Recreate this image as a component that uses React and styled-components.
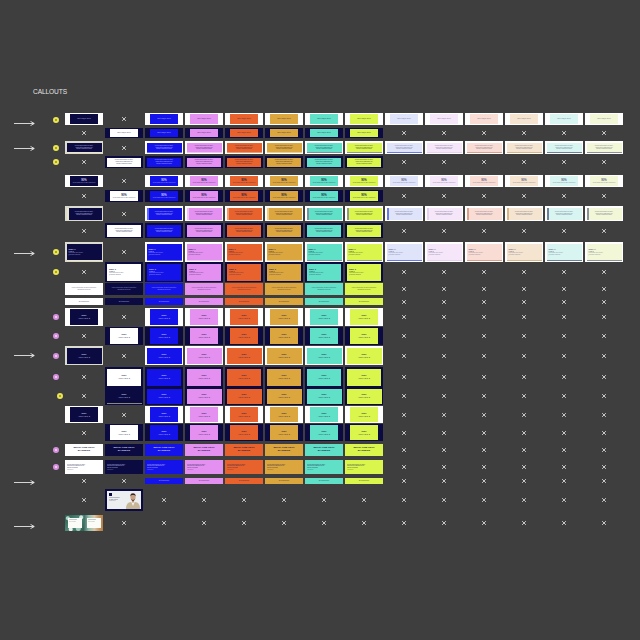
import React from 'react';
import styled, { createGlobalStyle } from 'styled-components';

const Global = createGlobalStyle`
  html, body { margin: 0; padding: 0; background: #3e3e3e; }
  #root { min-height: 640px; }
`;

const NAVY = '#0b0b42';
const WHITE = '#ffffff';
const SAT = ['#1414ea', '#e390f0', '#e8622d', '#dca63e', '#60e0c7', '#daf64c'];
const SAT_ACC = ['#5a66ff', '#f3c0f7', '#f29c6e', '#efcc88', '#7d8fa2', '#8f9a8a'];
const PASTEL = ['#dfe4fb', '#f6e6f9', '#f9ddd4', '#f5e5d0', '#d8f5f2', '#f2f7d8'];
const PASTEL_ACC = ['#6a7be0', '#ead0f0', '#dba08c', '#d6b688', '#6e7f98', '#8c909a'];

const ROWS = [
  { h: 12, gap: 3, arrow: 4, dot: 'y', kind: 'A', content: 'hdr', pastel: true },
  { h: 10, gap: 3, kind: 'B', content: 'hdr' },
  { h: 13, gap: 2, arrow: 1, dot: 'y', kind: 'C', content: 'para', pastel: true, accent: 'bottom' },
  { h: 12, gap: 7, dot: 'y', kind: 'D', content: 'para' },
  { h: 12, gap: 3, kind: 'A', content: 'pct', pastel: true },
  { h: 12, gap: 4, kind: 'B', content: 'pct' },
  { h: 15, gap: 2, kind: 'C', content: 'para', pastel: true, accent: 'left' },
  { h: 15, gap: 4, kind: 'D', content: 'para' },
  { h: 20, gap: 0, arrow: 1, dot: 'y', kind: 'C', content: 'uno', pastel: true, accent: 'bottom' },
  { h: 20, gap: 1, dot: 'y', kind: 'D', content: 'uno' },
  { h: 12, gap: 3, kind: 'P', content: 'lines' },
  { h: 7, gap: 3, kind: 'P', content: 'bar' },
  { h: 18, gap: 1, dot: 'p', kind: 'A', content: 'anchor' },
  { h: 18, gap: 1, dot: 'p', kind: 'B', content: 'anchor' },
  { h: 19, gap: 2, arrow: 0, dot: 'p', kind: 'C', content: 'anchor' },
  { h: 20, gap: 0, dot: 'p', kind: 'D', content: 'anchor' },
  { h: 18, gap: 1, dot: 'y', dotShift: 4, kind: 'E', content: 'anchor' },
  { h: 17, gap: 1, kind: 'A', content: 'anchor' },
  { h: 17, gap: 3, kind: 'B', content: 'anchor' },
  { h: 12, gap: 4, dot: 'p', kind: 'P', content: 'multi' },
  { h: 14, gap: 4, dot: 'p', kind: 'P', content: 'left' },
  { h: 6, gap: 5, arrow: 1, kind: 'BAR', content: 'bar' },
  { h: 22, gap: 4, kind: 'PHOTO' },
  { h: 16, gap: 0, arrow: 3, kind: 'LEAF' },
];

function cellsFor(row) {
  const X = { x: true };
  const cells = [];
  const { kind, pastel, accent } = row;
  const satCells = (frame, pad) =>
    SAT.map((c, i) => ({ frame, pad, fill: c, acc: accent ? SAT_ACC[i] : null }));
  const pastelCells = (frame, pad) =>
    PASTEL.map((c, i) => ({ frame, pad, fill: c, acc: accent ? PASTEL_ACC[i] : null, soft: true }));
  const xs = (n) => Array.from({ length: n }, () => X);

  if (kind === 'A') {
    const pad = '1px 5px';
    cells.push({ frame: WHITE, pad, fill: NAVY }, X, ...satCells(WHITE, pad));
    cells.push(...(pastel ? pastelCells(WHITE, pad) : xs(6)));
  } else if (kind === 'B') {
    const pad = '1px 5px';
    cells.push(X, { frame: NAVY, pad, fill: WHITE }, ...satCells(NAVY, pad), ...xs(6));
  } else if (kind === 'C') {
    const pad = '1.5px';
    cells.push({ frame: '#dcdbd0', pad, fill: NAVY, acc: accent ? '#e9e6c8' : null }, X, ...satCells(WHITE, pad));
    cells.push(...(pastel ? pastelCells(WHITE, pad) : xs(6)));
  } else if (kind === 'D') {
    const pad = '1.5px 2px';
    cells.push(X, { frame: NAVY, pad, fill: WHITE }, ...satCells(NAVY, pad), ...xs(6));
  } else if (kind === 'E') {
    const pad = '1.5px';
    cells.push(X, { frame: NAVY, pad, fill: NAVY, acc: '#8a8a80', accBottom: true }, ...satCells(NAVY, pad), ...xs(6));
  } else if (kind === 'P') {
    cells.push({ fill: WHITE }, { fill: NAVY }, ...SAT.map((c) => ({ fill: c })), ...xs(6));
  } else if (kind === 'BAR') {
    cells.push(X, X, ...SAT.map((c) => ({ fill: c })), ...xs(6));
  } else if (kind === 'PHOTO') {
    cells.push(X, { photo: true }, ...xs(12));
  } else if (kind === 'LEAF') {
    cells.push({ leaf: true }, ...xs(13));
  }
  return cells;
}

/* ---------- styled parts ---------- */

const Page = styled.div`
  padding-top: 88px;
  font-family: 'Liberation Sans', Arial, sans-serif;
`;

const Title = styled.div`
  padding-left: 33px;
  height: 8px;
  line-height: 8px;
  font-size: 6.6px;
  color: #e4e4e4;
  margin-bottom: 17px;
  letter-spacing: -0.1px;
`;

const Row = styled.div`
  display: flex;
  height: ${(p) => p.$h}px;
  margin-bottom: ${(p) => p.$gap}px;
`;

const Gutter = styled.div`
  width: 64px;
  flex: none;
  display: grid;
  grid-template-columns: 14px 21px 18px 6px 5px;
  align-items: center;
`;

const ArrowSlot = styled.div`
  grid-column: 2;
  height: 5px;
  display: flex;
  margin-top: ${(p) => p.$off * 2}px;
`;

const Dot = styled.div`
  grid-column: 4;
  width: 6px;
  height: 6px;
  box-sizing: border-box;
  border-radius: 50%;
  background: ${(p) => (p.$c === 'y' ? '#8c8a3a' : '#f4dcf6')};
  border: 2px solid ${(p) => (p.$c === 'y' ? '#ebe650' : '#d88ee0')};
  margin-left: ${(p) => p.$shift || 0}px;
`;

const Cells = styled.div`
  display: flex;
`;

const Cell = styled.div`
  width: 40px;
  height: 100%;
  flex: none;
  display: flex;
  align-items: center;
  justify-content: center;
`;

const Thumb = styled.div`
  width: 38px;
  height: 100%;
  box-sizing: border-box;
  display: flex;
  background: ${(p) => p.$frame || 'transparent'};
  padding: ${(p) => p.$pad || 0};
`;

const Face = styled.div`
  flex: 1;
  min-width: 0;
  background: ${(p) => p.$fill};
  color: ${(p) => p.$ink};
  display: flex;
  flex-direction: column;
  justify-content: center;
  align-items: ${(p) => (p.$left ? 'flex-start' : 'center')};
  padding: ${(p) => (p.$left ? '0 2px' : '0 1px')};
  box-sizing: border-box;
  overflow: hidden;
  white-space: nowrap;
  line-height: 1.15;
  box-shadow: ${(p) =>
    p.$acc === 'bottom'
      ? `inset 0 -1px 0 ${p.$accColor}`
      : p.$acc === 'left'
      ? `inset 2px 0 0 ${p.$accColor}`
      : 'none'};
`;

const T = styled.span`
  display: block;
  font-size: ${(p) => p.$s}px;
  font-weight: ${(p) => (p.$b ? 700 : 400)};
  opacity: ${(p) => (p.$o != null ? p.$o : 0.85)};
  letter-spacing: ${(p) => p.$ls || 0}px;
`;

const PhotoFrame = styled.div`
  width: 38px;
  height: 100%;
  box-sizing: border-box;
  background: ${NAVY};
  padding: 2px;
  display: flex;
`;

const PhotoCard = styled.div`
  flex: 1;
  background: #eceef0;
  display: flex;
  align-items: stretch;
`;

const PhotoText = styled.div`
  flex: 1;
  padding: 1.5px 2px;
  display: flex;
  flex-direction: column;
  gap: 0.6px;
  color: #2b2b4a;
  white-space: nowrap;
  overflow: hidden;
`;

const Logo = styled.div`
  width: 3px;
  height: 3px;
  background: ${NAVY};
  margin-bottom: 1px;
`;

const LeafThumb = styled.div`
  width: 38px;
  height: 100%;
  display: flex;
`;

const LeafHalf = styled.div`
  flex: 1;
  display: flex;
  padding: 3px 2.5px;
  box-sizing: border-box;
  background: ${(p) =>
    p.$tan
      ? 'linear-gradient(90deg, #3f6d60 0%, #8fbfae 25%, #d8c6a8 55%, #c59460 80%, #b07c48 100%)'
      : `radial-gradient(circle at 15% 20%, #a6d3c4 0 1.5px, transparent 2.5px),
         radial-gradient(circle at 70% 85%, #9ccbbb 0 2px, transparent 3px),
         radial-gradient(circle at 85% 15%, #cfe7de 0 1.5px, transparent 2.5px),
         radial-gradient(circle at 30% 90%, #e8f2ee 0 1.5px, transparent 2.5px),
         linear-gradient(135deg, #2d5a4e, #4f8a78 50%, #2f5f52)`};
`;

const LeafCard = styled.div`
  flex: 1;
  background: #fbfbf8;
  color: #2f4a44;
  padding: 1px 1.5px;
  display: flex;
  flex-direction: column;
  gap: 0.5px;
  overflow: hidden;
  white-space: nowrap;
`;

/* ---------- pieces ---------- */

function Arrow() {
  return (
    <svg width="21" height="5" viewBox="0 0 21 5">
      <line x1="0" y1="2.5" x2="20" y2="2.5" stroke="#e6e6e6" strokeWidth="0.9" />
      <polyline points="16.5,0.4 20.3,2.5 16.5,4.6" fill="none" stroke="#e6e6e6" strokeWidth="0.9" />
    </svg>
  );
}

function CrossIcon() {
  return (
    <svg width="4" height="4" viewBox="0 0 4 4" style={{ display: 'block' }}>
      <path d="M0.4 0.4 L3.6 3.6 M3.6 0.4 L0.4 3.6" stroke="#d6d6d6" strokeWidth="0.9" strokeLinecap="round" />
    </svg>
  );
}

function Person() {
  return (
    <svg width="16" height="18" viewBox="0 0 16 18" style={{ display: 'block', alignSelf: 'flex-end' }}>
      <path d="M1 18 C1 13 3 11.5 6 11 L10 11 C13 11.5 15 13 15 18 Z" fill="#c8b796" />
      <path d="M6.3 11 L8 15 L9.7 11 Z" fill="#f4f1ea" />
      <rect x="7" y="8.5" width="2" height="3" fill="#c49a7a" />
      <ellipse cx="8" cy="6" rx="2.6" ry="3.1" fill="#c9a283" />
      <path d="M5.3 5.4 C5.3 2.8 6.6 2.2 8 2.2 C9.6 2.2 10.8 3 10.7 5.4 C10.2 4.2 9 3.8 8 3.9 C6.9 3.9 5.8 4.3 5.3 5.4 Z" fill="#3a2c24" />
      <path d="M5.6 7 C6 9 7 9.8 8 9.8 C9 9.8 10 9 10.4 7 C10 8.5 9 8.9 8 8.9 C7 8.9 6 8.5 5.6 7 Z" fill="#4a372c" />
    </svg>
  );
}

function Content({ kind }) {
  switch (kind) {
    case 'hdr':
      return (
        <>
          <T $s={2.1}>Text goes here</T>
          <T $s={1.4} $o={0.6}>•</T>
        </>
      );
    case 'para':
      return (
        <>
          <T $s={1.5}>Lorem ipsum dolor sit amet,</T>
          <T $s={1.5}>consectetur adipiscing elit</T>
          <T $s={1.5}>sed do eiusmod tempor</T>
        </>
      );
    case 'pct':
      return (
        <>
          <T $s={2.7} $b $o={1}>90%</T>
          <T $s={1.3} $o={0.7}>Lorem ipsum dolor sit amet consectetur</T>
        </>
      );
    case 'uno':
      return (
        <>
          <T $s={2.3} $b $o={1}>UNO 1</T>
          <T $s={1.8}>LINE 2</T>
          <T $s={1.2} $o={0.7}>Lorem ipsum dolor sit amet</T>
          <T $s={1.2} $o={0.7}>consectetur adipiscing</T>
          <T $s={1.2} $o={0.6}>•</T>
        </>
      );
    case 'lines':
      return (
        <>
          <T $s={1.4} $o={0.7}>Lorem ipsum dolor sit amet consectetur</T>
          <T $s={1.4} $o={0.7}>adipiscing elit sed do</T>
        </>
      );
    case 'bar':
      return <T $s={1.6}>Text goes here</T>;
    case 'anchor':
      return (
        <>
          <T $s={2.2} $b $o={1}>UNO</T>
          <T $s={2.2} $ls={0.15}>ANCHOR 2</T>
        </>
      );
    case 'multi':
      return (
        <>
          <T $s={2.5} $b $o={1}>MULTI LINE TEXT</T>
          <T $s={2.5} $b $o={1}>BANNERS</T>
        </>
      );
    case 'left':
      return (
        <>
          <T $s={1.5}>Lorem ipsum dolor sit amet</T>
          <T $s={1.5}>consectetur adipiscing elit</T>
          <T $s={1.5}>sed do eiusmod</T>
          <T $s={1.2} $o={0.6}>Learn more ›</T>
        </>
      );
    default:
      return null;
  }
}

function inkFor(fill, soft) {
  if (fill === NAVY || fill === SAT[0]) return '#d4d7ff';
  if (soft) return '#5a5a80';
  return '#20204a';
}

function ThumbCell({ spec, row }) {
  if (spec.x) return <CrossIcon />;
  if (spec.photo)
    return (
      <PhotoFrame>
        <PhotoCard>
          <PhotoText>
            <Logo />
            <T $s={1.3}>Lorem ipsum dolor</T>
            <T $s={1.3}>sit amet consec</T>
            <T $s={1.1} $o={0.6}>adipiscing elit</T>
          </PhotoText>
          <Person />
        </PhotoCard>
      </PhotoFrame>
    );
  if (spec.leaf)
    return (
      <LeafThumb>
        <LeafHalf>
          <LeafCard>
            <T $s={1.3}>Lorem ipsum</T>
            <T $s={1.1} $o={0.6}>dolor sit amet</T>
          </LeafCard>
        </LeafHalf>
        <LeafHalf $tan>
          <LeafCard>
            <T $s={1.3}>Lorem ipsum</T>
            <T $s={1.1} $o={0.6}>dolor sit amet</T>
          </LeafCard>
        </LeafHalf>
      </LeafThumb>
    );
  const accMode = spec.acc ? (spec.accBottom ? 'bottom' : row.accent) : null;
  return (
    <Thumb $frame={spec.frame} $pad={spec.pad}>
      <Face
        $fill={spec.fill}
        $ink={inkFor(spec.fill, spec.soft)}
        $left={row.content === 'uno' || row.content === 'left'}
        $acc={accMode}
        $accColor={spec.acc}
      >
        <Content kind={row.content} />
      </Face>
    </Thumb>
  );
}

export default function App() {
  return (
    <Page>
      <Global />
      <Title>CALLOUTS</Title>
      {ROWS.map((row, ri) => (
        <Row key={ri} $h={row.h} $gap={row.gap}>
          <Gutter>
            {row.arrow != null && (
              <ArrowSlot $off={row.arrow}>
                <Arrow />
              </ArrowSlot>
            )}
            {row.dot && <Dot $c={row.dot} $shift={row.dotShift} />}
          </Gutter>
          <Cells>
            {cellsFor(row).map((spec, ci) => (
              <Cell key={ci}>
                <ThumbCell spec={spec} row={row} />
              </Cell>
            ))}
          </Cells>
        </Row>
      ))}
    </Page>
  );
}
